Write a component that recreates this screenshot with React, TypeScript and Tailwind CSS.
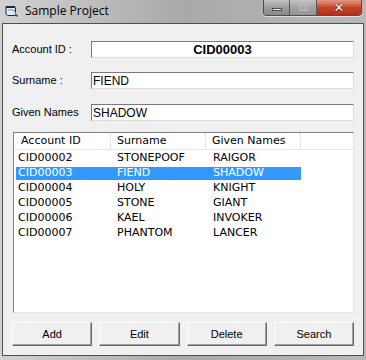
import React from "react";

const rows = [
  ["CID00002", "STONEPOOF", "RAIGOR"],
  ["CID00003", "FIEND", "SHADOW"],
  ["CID00004", "HOLY", "KNIGHT"],
  ["CID00005", "STONE", "GIANT"],
  ["CID00006", "KAEL", "INVOKER"],
  ["CID00007", "PHANTOM", "LANCER"],
];

const listFont = { fontFamily: '"DejaVu Sans", Verdana, sans-serif' };
const labelFont = { fontFamily: '"Liberation Sans", Arial, sans-serif' };

function TitleIcon() {
  return (
    <svg width="13" height="12" viewBox="0 0 13 12">
      <path d="M1 1.5 L9 1.5 L10.5 3 L10.5 10.5 L2.5 10.5 L1 9 Z" fill="#dfe9f2" stroke="#1d2a3a" strokeWidth="1" />
      <rect x="1" y="1" width="9" height="2" fill="#1d2a3a" />
      <path d="M3 5 L9 5 L11.5 10.5" fill="none" stroke="#6c8cb0" strokeWidth="1" />
      <rect x="11" y="10" width="1.5" height="1.5" fill="#1d2a3a" />
    </svg>
  );
}

function Field({ label, value, bold, mt }: { label: string; value: string; bold?: boolean; mt: string }) {
  return (
    <div className={`flex items-center h-[17px] ${mt}`}>
      <div className="w-[79px] text-[11px] text-black leading-none" style={labelFont}>
        {label}
      </div>
      <div
        className={`flex-1 h-[17px] bg-white border border-t-[#7a7a7a] border-l-[#7a7a7a] border-b-[#dcdcdc] border-r-[#dcdcdc] flex items-center text-black ${
          bold ? "justify-center font-bold text-[13px]" : "pl-[1px] text-[12px]"
        }`}
        style={labelFont}
      >
        {value}
      </div>
    </div>
  );
}

function Btn({ children }: { children: React.ReactNode }) {
  return (
    <div
      className="h-[24px] bg-[#f0f0f0] border border-t-white border-l-white border-b-[#696969] border-r-[#696969] shadow-[inset_-1px_-1px_0_#a0a0a0] flex items-center justify-center text-[11px] text-black"
      style={labelFont}
    >
      {children}
    </div>
  );
}

export default function App() {
  return (
    <div className="w-[366px] h-[360px] overflow-hidden flex flex-col bg-gradient-to-r from-[#d2d2d2] via-[#a9a9a9] to-[#b8b8b8]">
      {/* Title bar */}
      <div className="h-[23px] flex items-start relative">
        <div className="ml-[5px] mt-[5px]">
          <TitleIcon />
        </div>
        <div
          className="ml-[7px] mt-[2px] text-[12px] text-black leading-[17px]"
          style={{ fontFamily: '"Segoe UI", "Open Sans", sans-serif' }}
        >
          Sample Project
        </div>
        <div className="ml-auto mr-[4px] flex h-[16px] rounded-b-[4px] border border-t-0 border-[#4d4d4d] overflow-hidden shadow-[0_1px_0_rgba(255,255,255,0.6)]">
          <div className="w-[26px] h-full bg-gradient-to-b from-[#c4c4c4] via-[#9c9c9c] to-[#8a8a8a] flex items-center justify-center border-r border-[#5a5a5a]">
            <div className="w-[10px] h-[3px] bg-white border border-[#4a4a4a] mt-[4px]" />
          </div>
          <div className="w-[27px] h-full bg-gradient-to-b from-[#c4c4c4] via-[#a3a3a3] to-[#959595] flex items-center justify-center border-r border-[#5a5a5a]">
            <div className="w-[9px] h-[7px] border-2 border-[#b9b9b9] opacity-80" />
          </div>
          <div className="w-[44px] h-full bg-gradient-to-b from-[#e59a84] via-[#c6432b] to-[#b0301a] flex items-center justify-center">
            <span
              className="text-white font-bold text-[13px] leading-none"
              style={{ fontFamily: '"DejaVu Sans", sans-serif', textShadow: "0 0 1px #3a0a00, 0 0 1px #3a0a00" }}
            >
              ✕
            </span>
          </div>
        </div>
      </div>

      {/* Client area */}
      <div className="mx-[2px] h-[333px] border border-[#4f4f4f] bg-[#f0f0f0] flex flex-col px-[9px] pt-[17px]">
        <Field label="Account ID :" value="CID00003" bold mt="" />
        <Field label="Surname :" value="FIEND" mt="mt-[14px]" />
        <Field label="Given Names" value="SHADOW" mt="mt-[15px]" />

        {/* List view */}
        <div
          className="mt-[11px] ml-[1px] h-[181px] bg-white border border-t-[#828282] border-l-[#828282] border-b-[#e3e3e3] border-r-[#e3e3e3] flex flex-col text-[11px] text-black"
          style={listFont}
        >
          <div className="h-[17px] flex border-b border-[#e5e5e5] shrink-0">
            <div className="w-[97px] pl-[7px] border-r border-[#e5e5e5] flex items-center">Account ID</div>
            <div className="w-[95px] pl-[6px] border-r border-[#e5e5e5] flex items-center">Surname</div>
            <div className="w-[95px] pl-[6px] border-r border-[#e5e5e5] flex items-center">Given Names</div>
            <div className="flex-1" />
          </div>
          <div className="pt-[1px] flex flex-col">
            {rows.map((r, i) => {
              const sel = i === 1;
              return (
                <div key={r[0]} className="h-[15px] flex items-center">
                  <div
                    className={`ml-[2px] h-[13px] flex items-center ${sel ? "bg-[#3399ff] text-white" : ""}`}
                  >
                    <div className="w-[95px] pl-[2px]">{r[0]}</div>
                    <div className="w-[95px] pl-[6px]">{r[1]}</div>
                    <div className="w-[95px] pl-[7px]">{r[2]}</div>
                  </div>
                </div>
              );
            })}
          </div>
        </div>

        {/* Buttons */}
        <div className="mt-[9px] grid grid-cols-4 gap-[7px]">
          <Btn>Add</Btn>
          <Btn>Edit</Btn>
          <Btn>Delete</Btn>
          <Btn>Search</Btn>
        </div>
      </div>
    </div>
  );
}
